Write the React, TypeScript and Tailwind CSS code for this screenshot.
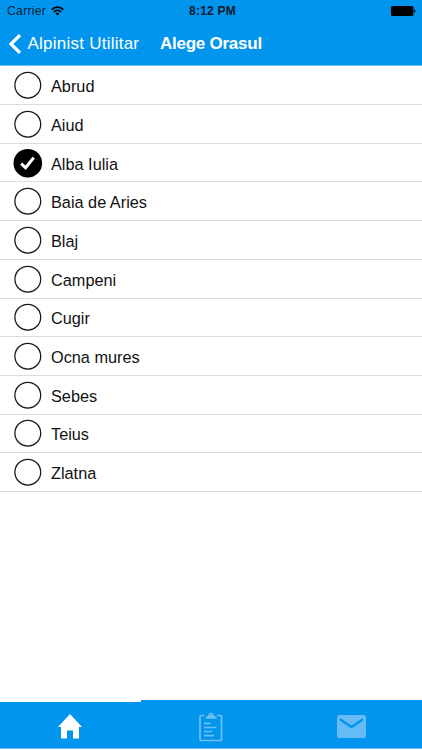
import React from "react";

const cities = [
  "Abrud",
  "Aiud",
  "Alba Iulia",
  "Baia de Aries",
  "Blaj",
  "Campeni",
  "Cugir",
  "Ocna mures",
  "Sebes",
  "Teius",
  "Zlatna",
];

const StatusBar = () => (
  <div className="relative flex h-[22px] items-center justify-between pl-[7px] pr-[6px] text-black">
    <div className="flex items-center gap-[5px]">
      <span className="text-[12.2px] leading-[22px] tracking-[0.28px] text-[#0a2338]">Carrier</span>
      <svg width="13" height="10" viewBox="0 0 13 10" fill="none" stroke="currentColor" strokeWidth="1.6">
        <path d="M0.7 3.6C4 .3 9 .3 12.3 3.6" />
        <path d="M2.8 5.8C4.9 3.8 8.1 3.8 10.2 5.8" />
        <path d="M4.4 7.3C5.6 6.3 7.4 6.3 8.6 7.3L6.5 9.5Z" fill="currentColor" stroke="none" />
      </svg>
    </div>
    <span className="absolute left-[189px] top-0 whitespace-nowrap text-[12px] font-bold leading-[22px] tracking-[0.25px] text-[#061a2b]">
      8:12 PM
    </span>
    <svg width="25" height="10" viewBox="0 0 25 10" fill="currentColor">
      <rect x="0" y="0" width="22.5" height="10" rx="1.5" />
      <path d="M23.2 3.2C24.9 3.8 24.9 6.2 23.2 6.8Z" />
    </svg>
  </div>
);

const NavBar = () => (
  <div className="flex h-[43px] items-center pl-[9px] text-white">
    <svg width="13" height="20" viewBox="0 0 13 20" fill="none" stroke="currentColor" strokeWidth="3.2">
      <path d="M11 1L2 10L11 19" />
    </svg>
    <span className="ml-[5.5px] w-[132.5px] whitespace-nowrap text-[17px] leading-5 tracking-[0.24px]">
      Alpinist Utilitar
    </span>
    <h1 className="whitespace-nowrap text-[17px] font-bold leading-5 tracking-[-0.25px]">Alege Orasul</h1>
  </div>
);

const CityRow = ({ name, checked }: { name: string; checked: boolean }) => (
  <li className="flex h-[38.7px] items-center border-b border-[#dcdcdc] pl-[13px]">
    <svg width="30" height="30" viewBox="0 0 30 30">
      {checked ? (
        <>
          <circle cx="14.8" cy="15.2" r="14.3" fill="#000" />
          <path d="M8.2 15.6L12.6 19.8L20.7 9.6" fill="none" stroke="#fff" strokeWidth="3.1" />
        </>
      ) : (
        <circle cx="14.8" cy="15.2" r="12.9" fill="#fff" stroke="#1a1a1a" strokeWidth="1.3" />
      )}
    </svg>
    <span className="ml-2 pt-[2px] text-[16.3px] leading-5 text-[#111]">{name}</span>
  </li>
);

const TabBar = () => (
  <nav className="flex h-[49px] shrink-0 border-b border-[#6bbcf3] bg-[#0295ee]">
    <div className="flex flex-1 justify-center border-t-2 border-white pt-3 text-white">
      <svg width="24" height="25" viewBox="0 0 24 25" fill="currentColor">
        <path d="M12 0L0 13H3V24.5H9V16.5H15V24.5H21V13H24Z" />
      </svg>
    </div>
    <div className="flex flex-1 justify-center pt-3 text-[#71bff5]">
      <svg width="24" height="30" viewBox="0 0 24 30" fill="none" stroke="currentColor" strokeWidth="1.7">
        <path d="M5.5 3.5H2Q1 3.5 1 4.5V27.5Q1 28.5 2 28.5H21.5Q22.5 28.5 22.5 27.5V4.5Q22.5 3.5 21.5 3.5H18" />
        <path
          d="M6.5 6.7C6.5 4.5 8 4 9.3 3.8C9.3 -.7 14.7 -.7 14.7 3.8C16 4 17.5 4.5 17.5 6.7ZM12 1.7A.8 .8 0 1 0 12 3.3A.8 .8 0 1 0 12 1.7Z"
          fill="currentColor"
          fillRule="evenodd"
          stroke="none"
        />
        <path d="M5 11.3H11.5M5 15.5H17.5M5 19.5H13M5 23.7H15" />
      </svg>
    </div>
    <div className="flex flex-1 justify-center pt-[15px] text-[#67bbf5]">
      <svg width="29" height="24" viewBox="0 0 29 24">
        <rect width="29" height="23" rx="2.5" fill="currentColor" />
        <path d="M3 4.3L14.5 12L26 4.3" fill="none" stroke="#0295ee" strokeWidth="2.4" />
      </svg>
    </div>
  </nav>
);

const App = () => {
  const selected = "Alba Iulia";

  return (
    <div className="flex h-[750px] w-[422px] flex-col overflow-hidden bg-white pb-px font-['Liberation_Sans',sans-serif]">
      <header className="h-[66px] shrink-0 border-b border-[#6fbef5] bg-[#0295ee]">
        <StatusBar />
        <NavBar />
      </header>
      <ul className="flex-1 pt-[0.4px]">
        {cities.map((city) => (
          <CityRow key={city} name={city} checked={city === selected} />
        ))}
      </ul>
      <TabBar />
    </div>
  );
};

export default App;
